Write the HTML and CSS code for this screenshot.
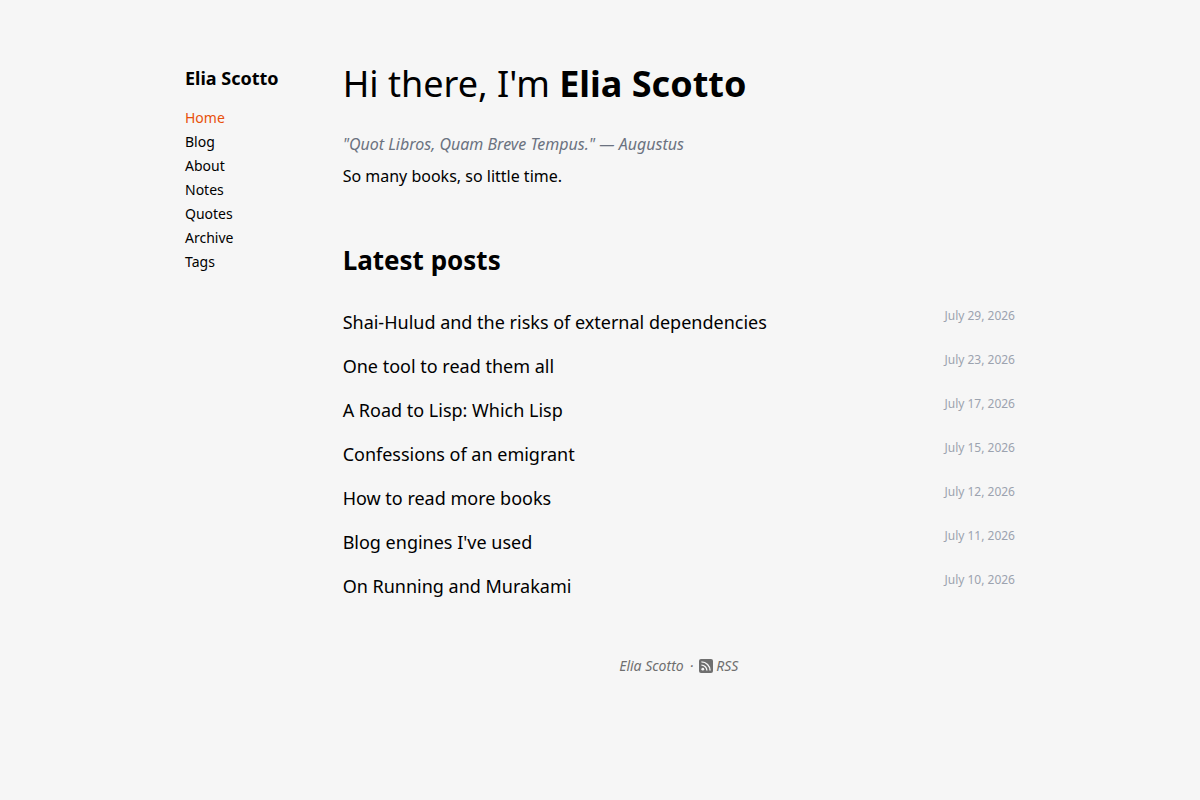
FILE: index.html
```html
<!DOCTYPE html>
<html lang="en">
<head>
  <meta charset="utf-8">
  <meta name="viewport" content="width=device-width, initial-scale=1">
  <title>Elia Scotto</title>
  <link rel="stylesheet" href="styles.css">
</head>
<body>
  <div class="layout">
    <header class="sidebar">
      <a class="site-title" href="#">Elia Scotto</a>
      <nav class="menu">
        <a class="active" href="#">Home</a>
        <a href="#">Blog</a>
        <a href="#">About</a>
        <a href="#">Notes</a>
        <a href="#">Quotes</a>
        <a href="#">Archive</a>
        <a href="#">Tags</a>
      </nav>
    </header>
    <div class="content">
      <main>
        <h1>Hi there, I'm <strong>Elia Scotto</strong></h1>
        <p class="motto">"Quot Libros, Quam Breve Tempus." — Augustus</p>
        <p class="intro">So many books, so little time.</p>
        <h2>Latest posts</h2>
        <ul class="posts">
          <li><a href="#">Shai-Hulud and the risks of external dependencies</a><time datetime="2026-07-29">July 29, 2026</time></li>
          <li><a href="#">One tool to read them all</a><time datetime="2026-07-23">July 23, 2026</time></li>
          <li><a href="#">A Road to Lisp: Which Lisp</a><time datetime="2026-07-17">July 17, 2026</time></li>
          <li><a href="#">Confessions of an emigrant</a><time datetime="2026-07-15">July 15, 2026</time></li>
          <li><a href="#">How to read more books</a><time datetime="2026-07-12">July 12, 2026</time></li>
          <li><a href="#">Blog engines I've used</a><time datetime="2026-07-11">July 11, 2026</time></li>
          <li><a href="#">On Running and Murakami</a><time datetime="2026-07-10">July 10, 2026</time></li>
        </ul>
      </main>
      <footer class="footer">
        <a href="#">Elia Scotto</a>
        <span>·</span>
        <a class="rss" href="#">
          <svg width="14" height="14" viewBox="0 0 14 14" aria-hidden="true">
            <rect width="14" height="14" rx="2" fill="#6f6f6f"/>
            <circle cx="3.8" cy="10.2" r="1.4" fill="#f6f6f6"/>
            <path d="M2.4 6.1a5.5 5.5 0 0 1 5.5 5.5M2.4 2.9a8.7 8.7 0 0 1 8.7 8.7" fill="none" stroke="#f6f6f6" stroke-width="1.4"/>
          </svg>
          RSS
        </a>
      </footer>
    </div>
  </div>
</body>
</html>
```
FILE: styles.css
```css
body {
  margin: 0;
  background: #f6f6f6;
  color: #000;
  font-family: "Noto Sans", sans-serif;
  font-size: 16px;
  line-height: 24px;
}

a {
  color: inherit;
  text-decoration: none;
}

.layout {
  display: flex;
  gap: 64px;
  max-width: 830px;
  margin: 0 auto;
  padding: 64px 16px;
}

.sidebar {
  flex: none;
}

.site-title {
  font-size: 18px;
  font-weight: 700;
  line-height: 28px;
}

.menu {
  display: flex;
  flex-direction: column;
  margin-top: 14px;
  font-size: 14px;
}

.menu .active {
  color: #e8500a;
}

.content {
  flex: 1;
}

h1 {
  margin: 0 0 28px;
  font-size: 36px;
  font-weight: 400;
  line-height: 40px;
}

p {
  margin: 0 0 8px;
}

.motto {
  color: #6b7280;
  font-style: italic;
}

h2 {
  margin: 56px 0 28px;
  font-size: 26px;
  line-height: 32px;
}

.posts {
  display: flex;
  flex-direction: column;
  gap: 16px;
  margin: 0;
  padding: 4px 0 0;
  list-style: none;
}

.posts li {
  display: flex;
  justify-content: space-between;
  align-items: flex-start;
  gap: 16px;
}

.posts a {
  font-size: 18px;
  line-height: 28px;
}

.posts time {
  flex: none;
  color: #9ca3af;
  font-size: 12px;
  line-height: 16px;
}

.footer {
  display: flex;
  justify-content: center;
  gap: 6px;
  margin-top: 54px;
  color: #6f6f6f;
  font-size: 14px;
  font-style: italic;
}

.rss {
  display: flex;
  align-items: center;
  gap: 3px;
}
```
